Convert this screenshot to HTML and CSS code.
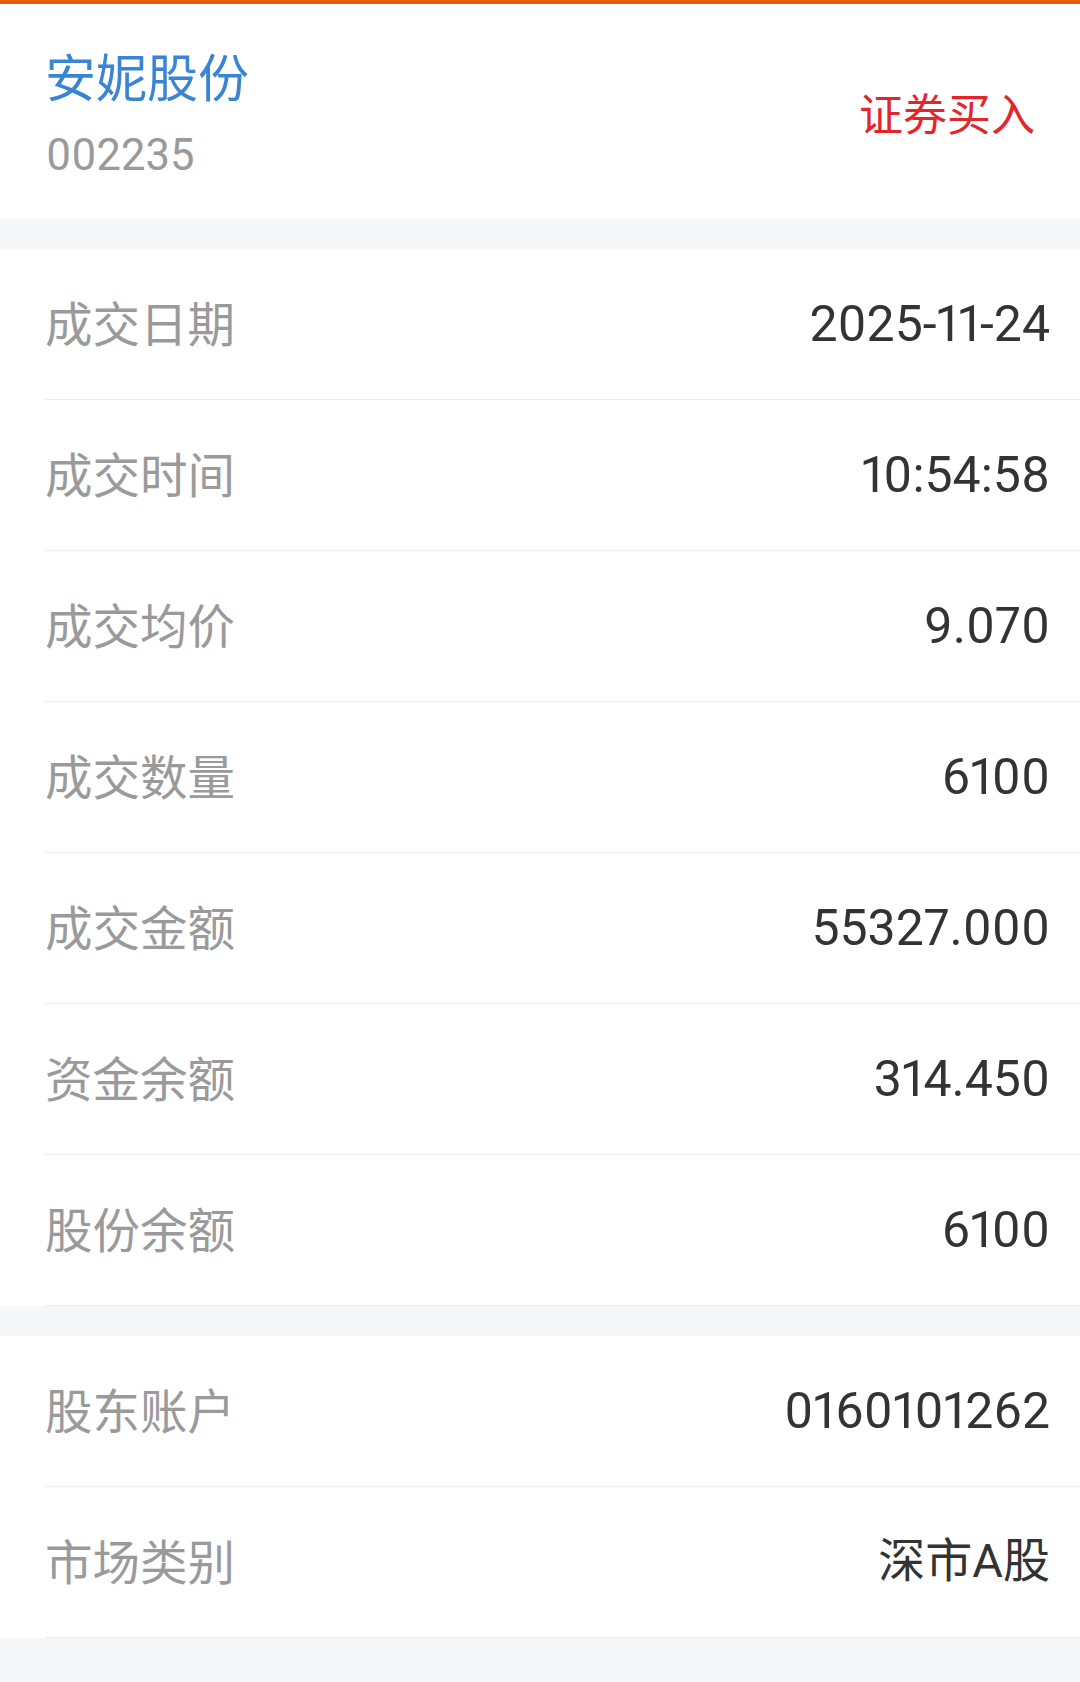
FILE: index.html
```html
<!DOCTYPE html>
<html lang="zh-CN">
<head>
<meta charset="utf-8">
<title>成交详情</title>
<link rel="stylesheet" href="styles.css">
</head>
<body>
<div class="topbar"></div>
<header class="header">
  <div class="stock">
    <div class="stock-name">安妮股份</div>
    <div class="stock-code">002235</div>
  </div>
  <div class="trade-type">证券买入</div>
</header>

<section class="section">
  <div class="row"><div class="row-inner"><span class="label">成交日期</span><span class="value">2025-11-24</span></div></div>
  <div class="row"><div class="row-inner"><span class="label">成交时间</span><span class="value">10:54:58</span></div></div>
  <div class="row"><div class="row-inner"><span class="label">成交均价</span><span class="value">9.070</span></div></div>
  <div class="row"><div class="row-inner"><span class="label">成交数量</span><span class="value">6100</span></div></div>
  <div class="row"><div class="row-inner"><span class="label">成交金额</span><span class="value">55327.000</span></div></div>
  <div class="row"><div class="row-inner"><span class="label">资金余额</span><span class="value">314.450</span></div></div>
  <div class="row"><div class="row-inner"><span class="label">股份余额</span><span class="value">6100</span></div></div>
</section>

<section class="section">
  <div class="row"><div class="row-inner"><span class="label">股东账户</span><span class="value">0160101262</span></div></div>
  <div class="row"><div class="row-inner"><span class="label">市场类别</span><span class="value value-text">深市A股</span></div></div>
</section>
</body>
</html>
```

FILE: styles.css
```css
html, body {
  margin: 0;
  padding: 0;
}

body {
  background: #f6f7f9;
  font-family: Roboto, "Noto Sans CJK SC", sans-serif;
  min-height: 1682px;
}

.topbar {
  height: 4px;
  background: #e85a0c;
}

.header {
  background: #ffffff;
  height: 215px;
  box-sizing: border-box;
  padding: 0 45px 0 45px;
  display: flex;
  align-items: center;
  justify-content: space-between;
}

.stock {
  display: flex;
  flex-direction: column;
  padding-top: 7px;
}

.stock-name {
  color: #3a84d6;
  font-size: 51px;
  line-height: 62px;
  font-family: "Noto Sans CJK SC", sans-serif;
}

.stock-code {
  color: #9a9a9a;
  font-size: 43.5px;
  line-height: 62px;
  margin-top: 19px;
  padding-left: 1px;
  font-variant-numeric: proportional-nums;
}

.trade-type {
  color: #e3262b;
  font-size: 44px;
  line-height: 60px;
  font-family: "Noto Sans CJK SC", sans-serif;
}

.section {
  background: #ffffff;
  margin-top: 30px;
}

.row {
  padding-left: 45px;
}

.row-inner {
  height: 150px;
  border-bottom: 1px solid #ececec;
  padding-right: 30px;
  display: flex;
  align-items: center;
  justify-content: space-between;
}

.label {
  color: #9a9a9a;
  font-size: 47.5px;
  font-family: "Noto Sans CJK SC", sans-serif;
  line-height: 60px;
  margin-bottom: 4px;
}

.value {
  color: #333333;
  font-size: 50px;
  line-height: 60px;
  font-variant-numeric: proportional-nums;
}

.value-text {
  font-size: 47px;
  margin-bottom: 3px;
}
```
